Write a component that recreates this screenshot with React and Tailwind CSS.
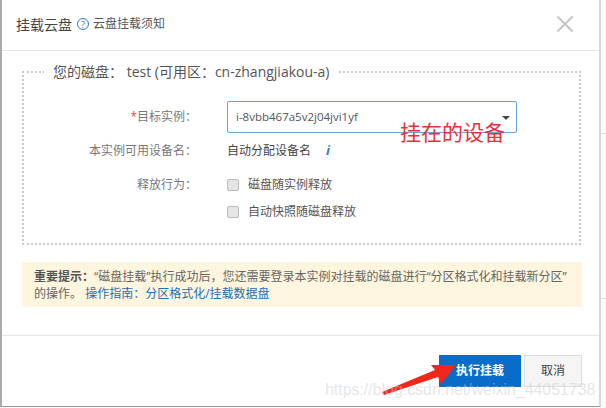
const FONT = { fontFamily: '"Open Sans", "Noto Sans CJK SC", sans-serif' };

function Row({ label, required, children, className }) {
  return (
    <div className={`flex items-center ${className}`}>
      <div className="w-[173px] shrink-0 text-right text-[12px] text-[#777]">
        {required && <span className="text-[#d9534f]">*</span>}
        {label}
      </div>
      <div className="ml-[30px] flex items-center">{children}</div>
    </div>
  );
}

function Check({ label }) {
  return (
    <label className="flex items-center text-[12px] text-[#555]">
      <span className="h-[12px] w-[12px] rounded-[2px] border border-[#bbb] bg-[#e4e4e4]" />
      <span className="ml-[9px]">{label}</span>
    </label>
  );
}

export default function App() {
  return (
    <div style={FONT} className="relative h-[408px] w-[606px] overflow-hidden bg-[#fafafa]">
      <div className="relative flex h-[407px] w-[601px] flex-col border-r-2 border-b border-l-2 border-r-[#d8d8d8] border-b-[#999] border-l-[#aaa] bg-white">
        {/* header */}
        <div className="flex h-[51px] shrink-0 items-center border-b border-[#e5e5e5] pl-[14px] pr-[25px] pb-[2px]">
          <span className="text-[14px] text-[#444]">挂载云盘</span>
          <span className="ml-[5px] flex h-[12px] w-[12px] items-center justify-center rounded-full border border-[#2f7fc1] text-[9px] leading-none text-[#2f7fc1]">?</span>
          <span className="ml-[4px] text-[12px] text-[#555]">云盘挂载须知</span>
          <svg className="ml-auto" width="18" height="18" viewBox="0 0 18 18">
            <path d="M1.5 1.5 L16.5 16.5 M16.5 1.5 L1.5 16.5" stroke="#c4c4c4" strokeWidth="2" />
          </svg>
        </div>

        {/* fieldset */}
        <div className="relative ml-[20px] mr-[18px] mt-[20px] h-[174px] shrink-0 border-2 border-dotted border-[#c9c9c9]">
          <div className="absolute left-[20px] top-[-11px] bg-white px-[9px] text-[14px] leading-[20px] text-[#555]">
            您的磁盘： test (可用区：cn-zhangjiakou-a)
          </div>
          <Row label="目标实例：" required className="mt-[28px] h-[32px]">
            <div className="relative flex h-[32px] w-[290px] items-center rounded-[2px] border border-[#6aa5d4] pl-[8px] text-[11.5px] text-[#555]">
              i-8vbb467a5v2j04jvi1yf
              <span className="absolute right-[6px] top-[14px] h-0 w-0 border-x-[4px] border-t-[4px] border-x-transparent border-t-[#444]" />
            </div>
          </Row>
          <Row label="本实例可用设备名：" className="mt-[8px] h-[20px]">
            <span className="text-[12px] text-[#444]">自动分配设备名</span>
            <span className="ml-[15px] text-[13px] font-bold italic text-[#2f7fc1]">i</span>
          </Row>
          <Row label="释放行为：" className="mt-[14px] h-[20px]">
            <Check label="磁盘随实例释放" />
          </Row>
          <Row label="" className="mt-[7px] h-[20px]">
            <Check label="自动快照随磁盘释放" />
          </Row>
        </div>

        {/* notice */}
        <div className="ml-[20px] mr-[17px] mt-[17px] h-[45px] shrink-0 bg-[#fdf5dd] px-[12px] py-[6px] text-[12px] leading-[17px] text-[#666]">
          <b className="font-bold text-[#555]">重要提示：</b>“磁盘挂载”执行成功后，您还需要登录本实例对挂载的磁盘进行“分区格式化和挂载新分区”
          <br />
          的操作。 <a className="text-[#1f6fb5]">操作指南：分区格式化/挂载数据盘</a>
        </div>

        {/* footer */}
        <div className="mt-[28px] flex flex-1 justify-end gap-[3px] border-t border-[#e5e5e5] pr-[17px] pt-[19px]">
          <button className="h-[32px] w-[82px] bg-[#0a6cc9] text-[12px] font-bold text-white">执行挂载</button>
          <button className="h-[32px] w-[58px] border border-[#ddd] bg-[#f5f5f5] text-[12px] text-[#444]">取消</button>
        </div>

        {/* annotations */}
        <span className="absolute left-[398px] top-[119px] text-[21px] leading-[26px] text-[#e8303a]">挂在的设备</span>
        <svg className="absolute left-[380px] top-[360px]" width="76" height="36" viewBox="0 0 76 36">
          <path d="M0 32 L53 10 L49 5 L74 5 L59 24 L56 17 L2 35 Z" fill="#f2271c" />
        </svg>
        <span className="absolute left-[323px] top-[380px] font-['Liberation_Sans'] text-[15.9px] leading-[20px] text-[#ccc]/50">https://blog.csdn.net/weixin_44051738</span>
      </div>
      {/* page behind the dialog */}
      <div className="absolute right-0 top-[133px] h-px w-[5px] bg-[#ddd]" />
      <div className="absolute right-0 top-[298px] h-px w-[5px] bg-[#ddd]" />
    </div>
  );
}
